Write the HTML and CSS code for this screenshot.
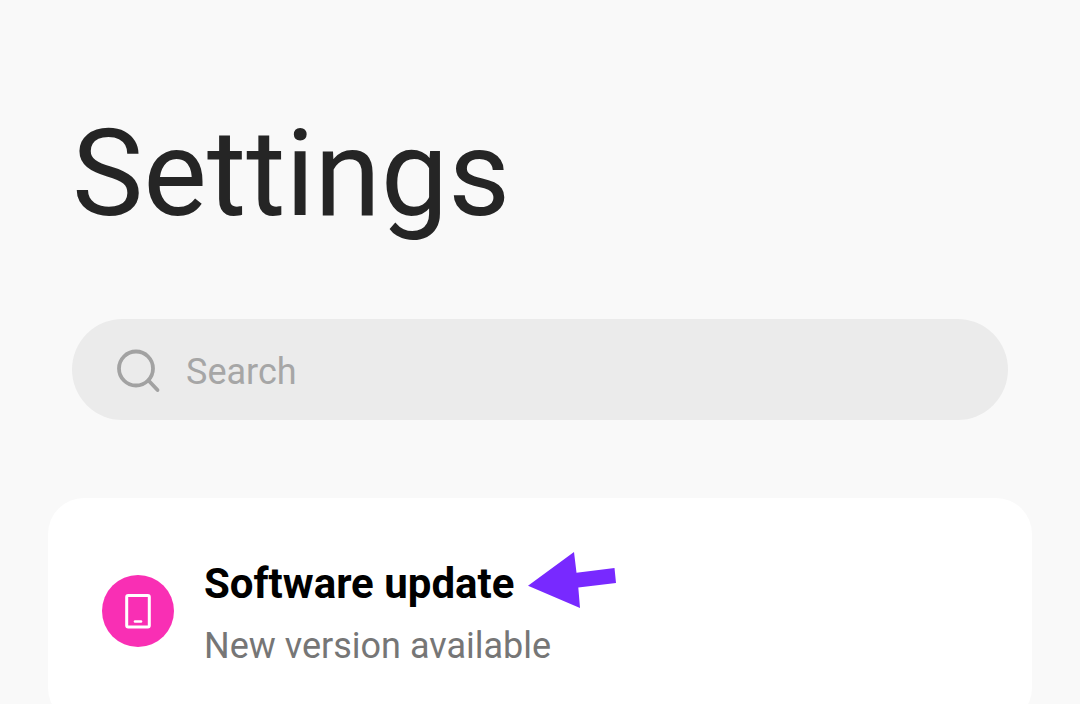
FILE: index.html
```html
<!DOCTYPE html>
<html lang="en">
<head>
  <meta charset="utf-8">
  <meta name="viewport" content="width=device-width, initial-scale=1">
  <title>Settings</title>
  <link rel="stylesheet" href="styles.css">
</head>
<body>
  <main class="page">
    <h1 class="page-title">Settings</h1>
    <label class="search">
      <svg class="search-icon" viewBox="0 0 48 48" fill="none" stroke="#a2a2a2" stroke-width="3.8" stroke-linecap="round" aria-hidden="true">
        <circle cx="22" cy="21.5" r="17"/>
        <path d="M34.5 33.5 L43.5 43"/>
      </svg>
      <input class="search-input" type="search" placeholder="Search" aria-label="Search">
    </label>
    <section class="card">
      <a class="item" href="#software-update">
        <svg class="item-icon" viewBox="0 0 72 72" aria-hidden="true">
          <circle cx="36" cy="36" r="36" fill="#f92fb4"/>
          <rect x="24.7" y="20.5" width="22.6" height="31.6" rx="1.5" fill="none" stroke="#fff" stroke-width="3"/>
          <path d="M33 46.5h6" stroke="#fff" stroke-width="2.6" stroke-linecap="round"/>
        </svg>
        <span class="item-text">
          <span class="item-title">Software update
            <svg class="pointer" viewBox="0 0 88 56" aria-hidden="true">
              <path d="M0 33.7 L46 0 L48.5 20.7 L86.5 16 L88 31 L50.3 35.6 L52 56 Z" fill="#7829ff"/>
            </svg>
          </span>
          <span class="item-note">New version available</span>
        </span>
      </a>
    </section>
  </main>
</body>
</html>
```
FILE: styles.css
```css
* {
  box-sizing: border-box;
}

body {
  margin: 0;
  background: #f9f9f9;
  color: #252525;
  font-family: Roboto, "Liberation Sans", sans-serif;
}

.page {
  display: flex;
  flex-direction: column;
  padding: 104px 48px 0;
}

.page-title {
  margin: 0 24px;
  font-size: 120px;
  font-weight: 400;
  line-height: 140px;
}

.search {
  display: flex;
  align-items: center;
  gap: 24px;
  margin: 75px 24px 78px;
  padding: 27px 42px 24px;
  border-radius: 51px;
  background: #ebebeb;
}

.search-icon {
  flex: none;
  width: 48px;
  height: 48px;
}

.search-input {
  flex: 1;
  min-width: 0;
  height: 50px;
  padding: 2px 0 0;
  border: 0;
  outline: 0;
  background: transparent;
  color: #252525;
  font: inherit;
  font-size: 36px;
  appearance: none;
}

.search-input::placeholder {
  color: #a6a6a6;
  opacity: 1;
}

.card {
  border-radius: 36px;
  background: #fff;
}

.item {
  display: flex;
  align-items: center;
  gap: 30px;
  padding: 58px 54px;
  color: inherit;
  text-decoration: none;
}

.item-icon {
  flex: none;
  width: 72px;
  height: 72px;
}

.item-text {
  display: flex;
  flex-direction: column;
  gap: 14px;
}

.item-title {
  display: flex;
  align-items: center;
  gap: 14px;
  color: #000;
  font-size: 42px;
  font-weight: 700;
  line-height: 56px;
}

.pointer {
  flex: none;
  width: 88px;
  height: 56px;
  margin-top: -9px;
}

.item-note {
  color: #767676;
  font-size: 36px;
  line-height: 40px;
}
```
